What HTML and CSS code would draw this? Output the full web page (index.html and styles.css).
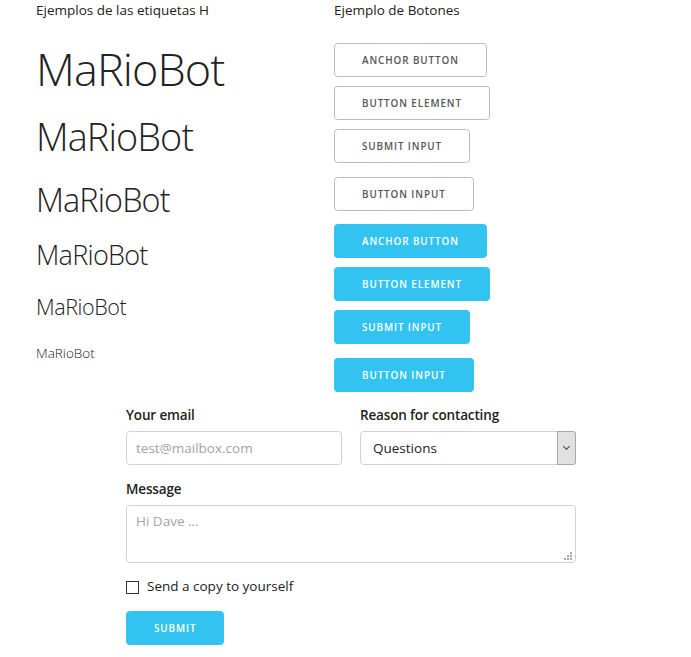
FILE: index.html
```html
<!DOCTYPE html>
<html lang="es">
<head>
<meta charset="utf-8">
<title>MaRioBot</title>
<link rel="stylesheet" href="styles.css">
</head>
<body>
<div class="page">
  <div class="top">
    <div class="col col-h">
      <p class="intro intro-h">Ejemplos de las etiquetas H</p>
      <h1>MaRioBot</h1>
      <h2>MaRioBot</h2>
      <h3>MaRioBot</h3>
      <h4>MaRioBot</h4>
      <h5>MaRioBot</h5>
      <h6>MaRioBot</h6>
    </div>
    <div class="col col-b">
      <p class="intro">Ejemplo de Botones</p>
      <div class="btn-stack">
        <a class="button" href="#">Anchor button</a>
        <button class="button" type="button">Button element</button>
        <input class="button btn-input" type="submit" value="Submit input">
        <input class="button btn-input" type="button" value="Button input">
        <a class="button button-primary" href="#">Anchor button</a>
        <button class="button button-primary" type="button">Button element</button>
        <input class="button button-primary btn-input" type="submit" value="Submit input">
        <input class="button button-primary btn-input" type="button" value="Button input">
      </div>
    </div>
  </div>

  <form class="contact">
    <div class="row">
      <div class="field">
        <label class="lbl" for="email">Your email</label>
        <input class="u-full" type="email" id="email" placeholder="test@mailbox.com">
      </div>
      <div class="field">
        <label class="lbl" for="reason">Reason for contacting</label>
        <div class="select-wrap">
          <select class="u-full" id="reason">
            <option>Questions</option>
            <option>Admiration</option>
            <option>Can I get your number?</option>
          </select>
        </div>
      </div>
    </div>
    <label class="lbl" for="msg">Message</label>
    <div class="ta-wrap">
      <textarea class="u-full" id="msg" placeholder="Hi Dave …"></textarea>
      <svg class="grip" width="9" height="9" viewBox="0 0 9 9" aria-hidden="true">
        <rect x="6" y="0" width="2" height="2"/>
        <rect x="3" y="3" width="2" height="2"/>
        <rect x="6" y="3" width="2" height="2"/>
        <rect x="0" y="6" width="2" height="2"/>
        <rect x="3" y="6" width="2" height="2"/>
        <rect x="6" y="6" width="2" height="2"/>
      </svg>
    </div>
    <label class="check">
      <input type="checkbox">
      <span class="label-body">Send a copy to yourself</span>
    </label>
    <input class="button button-primary" type="submit" value="Submit">
  </form>
</div>
</body>
</html>
```
FILE: styles.css
```css
html, body {
  margin: 0;
  padding: 0;
  background: #fff;
}
body {
  font-family: "Open Sans", "Noto Sans", sans-serif;
  font-size: 13.5px;
  line-height: 1.6;
  font-weight: 400;
  color: #222;
}

.top {
  display: flex;
  padding-left: 36px;
}
.col-h {
  width: 298px;
  flex: none;
}
.col-b {
  flex: 1;
}

.intro {
  margin: 0 0 21.5px;
}
.intro-h {
  margin-bottom: 20px;
}

h1, h2, h3, h4, h5, h6 {
  margin: 0 0 17.5px;
  font-weight: 300;
  color: #222;
}
h1 { font-size: 45px;   line-height: 1.2;  letter-spacing: -0.9px; }
h2 { font-size: 37.8px; line-height: 1.25; letter-spacing: -0.9px; }
h3 { font-size: 32.4px; line-height: 1.3;  letter-spacing: -0.9px; }
h4 { font-size: 27px;   line-height: 1.35; letter-spacing: -0.72px; }
h5 { font-size: 21.6px; line-height: 1.5;  letter-spacing: -0.45px; margin-bottom: 19px; }
h6 { font-size: 13.5px; line-height: 1.6;  letter-spacing: 0; margin-bottom: 0; }

/* Buttons */
.btn-stack {
  display: flex;
  flex-direction: column;
  align-items: flex-start;
}
.button {
  display: inline-block;
  box-sizing: border-box;
  height: 34px;
  margin: 0 0 9px;
  padding: 0 27px;
  font-family: "Open Sans", "Noto Sans", sans-serif;
  font-size: 9.9px;
  font-weight: 600;
  line-height: 32px;
  letter-spacing: 0.9px;
  text-transform: uppercase;
  text-decoration: none;
  text-align: center;
  white-space: nowrap;
  color: #555;
  background: transparent;
  border: 1px solid #bbb;
  border-radius: 3.6px;
  cursor: pointer;
  -webkit-appearance: none;
  appearance: none;
}
.btn-input {
  margin-bottom: 13.5px;
}
.button-primary {
  color: #fff;
  background-color: #33c3f0;
  border-color: #33c3f0;
}

/* Form */
.contact {
  width: 450px;
  margin: 0 0 0 126px;
}
.row {
  display: flex;
  gap: 18px;
}
.field {
  flex: 1;
  min-width: 0;
}
.lbl {
  display: block;
  margin-bottom: 4.5px;
  font-weight: 600;
  letter-spacing: -0.15px;
}
.u-full {
  display: block;
  width: 100%;
  box-sizing: border-box;
}
input[type="email"],
select,
textarea {
  height: 34px;
  margin: 0 0 13.5px;
  padding: 5px 9px;
  font-family: "Open Sans", "Noto Sans", sans-serif;
  font-size: 13.5px;
  color: #222;
  background: #fff;
  border: 1px solid #d1d1d1;
  border-radius: 3.6px;
  box-shadow: none;
  outline: none;
}
input::placeholder,
textarea::placeholder {
  color: #a3a3a3;
  opacity: 1;
}

.select-wrap {
  position: relative;
  margin-bottom: 13.5px;
}
.select-wrap select {
  margin: 0;
  padding-left: 12px;
  -webkit-appearance: none;
  appearance: none;
}
.select-wrap::after {
  content: "";
  position: absolute;
  top: 0;
  right: 0;
  bottom: 0;
  width: 17px;
  background: #e1e1e1;
  border: 1px solid #a9a9a9;
  border-radius: 0 3px 3px 0;
  pointer-events: none;
}
.select-wrap::before {
  content: "";
  position: absolute;
  z-index: 1;
  top: 13px;
  right: 7px;
  width: 4px;
  height: 4px;
  border-right: 1px solid #444;
  border-bottom: 1px solid #444;
  transform: rotate(45deg);
  pointer-events: none;
}

.ta-wrap {
  position: relative;
  margin-bottom: 13.5px;
}
.ta-wrap textarea {
  height: 58px;
  margin: 0;
  padding-top: 5.4px;
  line-height: 1.6;
  resize: none;
}
.grip {
  position: absolute;
  right: 3px;
  bottom: 2px;
  fill: #a8a8a8;
}

.check {
  display: flex;
  align-items: center;
  gap: 8px;
  margin-bottom: 13.5px;
}
.check input {
  width: 13px;
  height: 13px;
  margin: 0;
  box-sizing: border-box;
  border: 1px solid #333;
  border-radius: 0;
  background: #fff;
  -webkit-appearance: none;
  appearance: none;
}
.label-body {
  font-weight: 400;
}
.contact .button {
  margin-bottom: 0;
}
```
